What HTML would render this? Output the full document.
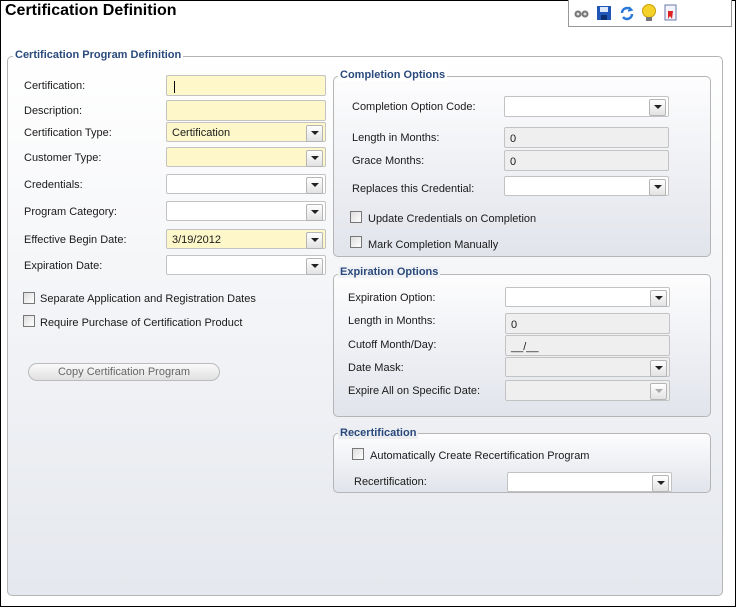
<!DOCTYPE html>
<html><head><meta charset="utf-8"><style>
*{box-sizing:border-box;margin:0;padding:0}
body{width:736px;height:607px;position:relative;background:#fff;font-family:"Liberation Sans",sans-serif;font-size:11px;color:#1a1a1a;overflow:hidden}
.frame{position:absolute;left:0;top:0;width:736px;height:607px;border:1px solid #000}
.abs{position:absolute}
.title{left:5px;top:2px;font-size:16px;font-weight:bold;color:#000}
.tb{left:568px;top:0;width:164px;height:27px;border:1px solid #999;border-top:none;background:#fff}
.panel{border:1px solid #b5b5b5;border-radius:5px}
.main{left:7px;top:56px;width:716px;height:540px;background:linear-gradient(#fff,#e5e8ee)}
.sub{background:linear-gradient(#fdfdfe,#e1e4eb)}
.leg{position:absolute;font-weight:bold;color:#2a4a7c;font-size:11px;padding:0 2px;margin-top:1px}
.lab{position:absolute;white-space:nowrap;margin-top:1px}
.in{position:absolute;border:1px solid #c3c3c3;border-radius:2px;background:#fff;height:21px;padding:5px 5px 0;font-size:11px}
.y{background:#fdf7c9}
.g{background:#efefef}
.dd::after{content:"";position:absolute;right:2px;top:2px;width:15px;height:15px;border:1px solid #b5b5b5;border-radius:2px;background:linear-gradient(#fff,#e2e2e2)}
.dd::before{content:"";position:absolute;right:6px;top:8px;border-left:4px solid transparent;border-right:4px solid transparent;border-top:4px solid #222;z-index:2}
.dis::before{border-top-color:#aaa}
.cb{position:absolute;width:12px;height:12px;border:1px solid #777;background:linear-gradient(135deg,#ddd,#fff)}
.btn{left:28px;top:363px;width:192px;height:18px;border:1px solid #bbb;border-radius:9px;background:linear-gradient(#fafafa,#e0e0e0);color:#666;text-align:center;line-height:17px}
</style></head><body>
<div class="frame"></div>
<div class="abs title">Certification Definition</div>
<div class="abs tb">
<svg width="164" height="26" style="position:absolute;left:0;top:0">
<g transform="translate(5,9)"><circle cx="4" cy="5" r="3.5" fill="#777"/><circle cx="11" cy="5" r="3.5" fill="#777"/><circle cx="4" cy="5" r="1.5" fill="#ddd"/><circle cx="11" cy="5" r="1.5" fill="#ddd"/></g>
<g transform="translate(28,6)"><rect width="14" height="14" fill="#2056b8"/><rect x="3" y="1" width="8" height="5" fill="#dde8f8"/><rect x="4" y="9" width="6" height="5" fill="#0c2f70"/></g>
<g transform="translate(50,5)" fill="none" stroke="#2a78d8" stroke-width="2.5"><path d="M3 8 A5 5 0 0 1 12 5"/><path d="M13 9 A5 5 0 0 1 4 12"/><path d="M10 2 L13 5 L9 6" stroke-width="1.5"/></g>
<g transform="translate(72,4)"><circle cx="8" cy="7" r="6.5" fill="#f5d22a" stroke="#c9a10a"/><rect x="5" y="13" width="6" height="4" fill="#777"/></g>
<g transform="translate(96,5)"><rect width="11" height="15" fill="#f4f4ff" stroke="#6a7aa8"/><path d="M3 6 L8 6 L7 14 L5 11 L3 14 Z" fill="#d22"/></g>
</svg></div>

<div class="abs panel main"></div>
<div class="leg" style="left:13px;top:48px;background:#fff">Certification Program Definition</div>

<div class="lab" style="left:24px;top:79px">Certification:</div>
<div class="lab" style="left:24px;top:104px">Description:</div>
<div class="lab" style="left:24px;top:126px">Certification Type:</div>
<div class="lab" style="left:24px;top:151px">Customer Type:</div>
<div class="lab" style="left:24px;top:178px">Credentials:</div>
<div class="lab" style="left:24px;top:205px">Program Category:</div>
<div class="lab" style="left:24px;top:233px">Effective Begin Date:</div>
<div class="lab" style="left:24px;top:259px">Expiration Date:</div>

<div class="in y" style="left:166px;top:75px;width:160px"><span style="border-left:1px solid #000;margin-left:2px">&nbsp;</span></div>
<div class="in y" style="left:166px;top:100px;width:160px"></div>
<div class="in y dd" style="left:166px;top:122px;width:160px;height:20px;padding-top:4px">Certification</div>
<div class="in y dd" style="left:166px;top:147px;width:160px;height:20px"></div>
<div class="in dd" style="left:166px;top:174px;width:160px;height:20px"></div>
<div class="in dd" style="left:166px;top:201px;width:160px;height:20px"></div>
<div class="in y dd" style="left:166px;top:229px;width:160px;height:20px;padding-top:4px">3/19/2012</div>
<div class="in dd" style="left:166px;top:255px;width:160px;height:20px"></div>

<div class="cb" style="left:23px;top:292px"></div>
<div class="lab" style="left:40px;top:292px">Separate Application and Registration Dates</div>
<div class="cb" style="left:23px;top:315px"></div>
<div class="lab" style="left:40px;top:316px">Require Purchase of Certification Product</div>
<div class="abs btn">Copy Certification Program</div>

<div class="abs panel sub" style="left:333px;top:76px;width:378px;height:181px"></div>
<div class="leg" style="left:338px;top:68px;background:#fff">Completion Options</div>
<div class="lab" style="left:352px;top:100px">Completion Option Code:</div>
<div class="lab" style="left:352px;top:131px">Length in Months:</div>
<div class="lab" style="left:352px;top:154px">Grace Months:</div>
<div class="lab" style="left:352px;top:182px">Replaces this Credential:</div>
<div class="in dd" style="left:504px;top:96px;width:165px;height:21px"></div>
<div class="in g" style="left:504px;top:127px;width:165px">0</div>
<div class="in g" style="left:504px;top:150px;width:165px">0</div>
<div class="in dd" style="left:504px;top:176px;width:165px;height:20px"></div>
<div class="cb" style="left:350px;top:211px"></div>
<div class="lab" style="left:368px;top:212px">Update Credentials on Completion</div>
<div class="cb" style="left:350px;top:236px"></div>
<div class="lab" style="left:368px;top:238px">Mark Completion Manually</div>

<div class="abs panel sub" style="left:333px;top:274px;width:378px;height:143px"></div>
<div class="leg" style="left:338px;top:265px;background:#f1f2f6">Expiration Options</div>
<div class="lab" style="left:348px;top:291px">Expiration Option:</div>
<div class="lab" style="left:348px;top:314px">Length in Months:</div>
<div class="lab" style="left:348px;top:338px">Cutoff Month/Day:</div>
<div class="lab" style="left:348px;top:361px">Date Mask:</div>
<div class="lab" style="left:348px;top:384px">Expire All on Specific Date:</div>
<div class="in dd" style="left:505px;top:287px;width:165px;height:20px"></div>
<div class="in g" style="left:505px;top:313px;width:165px">0</div>
<div class="in g" style="left:505px;top:335px;width:165px">__/__</div>
<div class="in g dd" style="left:505px;top:357px;width:165px;height:20px"></div>
<div class="in g dd dis" style="left:505px;top:380px;width:165px"></div>

<div class="abs panel sub" style="left:333px;top:433px;width:378px;height:60px"></div>
<div class="leg" style="left:338px;top:426px;background:#eceef2">Recertification</div>
<div class="cb" style="left:352px;top:448px"></div>
<div class="lab" style="left:370px;top:449px">Automatically Create Recertification Program</div>
<div class="lab" style="left:354px;top:475px">Recertification:</div>
<div class="in dd" style="left:507px;top:472px;width:165px;height:20px"></div>
</body></html>
